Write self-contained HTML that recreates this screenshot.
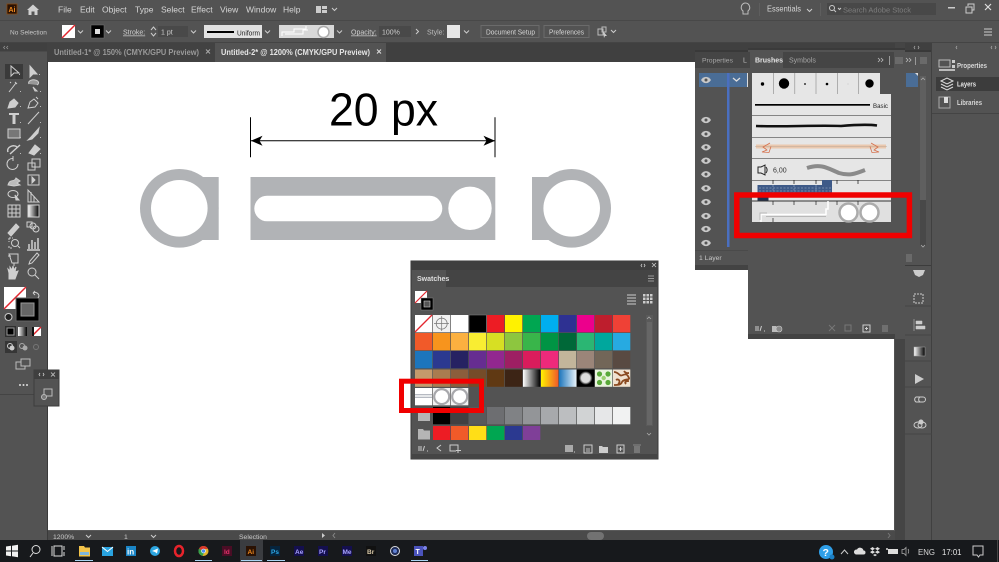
<!DOCTYPE html>
<html><head><meta charset="utf-8"><style>
html,body{margin:0;padding:0;background:#535353;width:999px;height:562px;overflow:hidden}
svg{display:block;font-family:"Liberation Sans",sans-serif;filter:blur(.3px)}
</style></head><body>
<svg width="999" height="562" viewBox="0 0 999 562" xmlns="http://www.w3.org/2000/svg">
<defs>
<linearGradient id="g1"><stop offset="0" stop-color="#fff"/><stop offset="1" stop-color="#000"/></linearGradient>
<linearGradient id="g2"><stop offset="0" stop-color="#fff200"/><stop offset="1" stop-color="#f15a29"/></linearGradient>
<linearGradient id="g3"><stop offset="0" stop-color="#1c75bc"/><stop offset="1" stop-color="#e6f2fa"/></linearGradient>
<radialGradient id="g4"><stop offset="0.55" stop-color="#ddd"/><stop offset="0.85" stop-color="#000"/></radialGradient>
</defs>
<rect width="999" height="562" fill="#535353"/>
<!-- menu bar -->
<rect x="7" y="4" width="10" height="10" fill="#2a1204" stroke="#8a4a10" stroke-width=".8"/>
<text x="8.500" y="12" font-size="7" font-weight="bold" fill="#f08a1d">Ai</text>
<path d="M27 10l6-5.500 6 5.500h-1.500v5h-3v-3.500h-3v3.500h-3v-5z" fill="#d0d0d0"/>
<g font-size="8.500" fill="#d6d6d6">
<text x="58" y="12.500">File</text><text x="80" y="12.500">Edit</text><text x="102" y="12.500">Object</text><text x="135" y="12.500">Type</text><text x="161" y="12.500">Select</text><text x="191" y="12.500">Effect</text><text x="220" y="12.500">View</text><text x="246" y="12.500">Window</text><text x="283" y="12.500">Help</text>
</g>
<rect x="316" y="6" width="5" height="7" fill="#ccc"/><rect x="322" y="6" width="5" height="3" fill="#ccc"/><rect x="322" y="10" width="5" height="3" fill="#ccc"/>
<path d="M332 8l2.500 2.500 2.500-2.500" fill="none" stroke="#ccc"/>
<path d="M745 3a4.500 4.500 0 0 1 3 8v3h-5v-3a4.500 4.500 0 0 1 2-8z" fill="none" stroke="#bbb"/>
<rect x="759" y="3" width="1" height="13" fill="#5e5e5e"/>
<text x="767" y="11.500" font-size="8.500" fill="#d6d6d6" textLength="34" lengthAdjust="spacingAndGlyphs">Essentials</text>
<path d="M807 9l2.500 2.500 2.500-2.500" fill="none" stroke="#ccc"/>
<rect x="820" y="3" width="1" height="13" fill="#5e5e5e"/>
<rect x="827" y="3" width="109" height="12" fill="#484848"/>
<circle cx="832" cy="8" r="2.500" fill="none" stroke="#ccc"/><path d="M834 10l2 2M838 8l1.500 1.500 1.500-1.500" stroke="#ccc" fill="none"/>
<text x="843" y="12.500" font-size="7.500" fill="#7e7e7e">Search Adobe Stock</text>
<rect x="948" y="7" width="7" height="1.500" fill="#ccc"/>
<rect x="966" y="7" width="6" height="6" fill="none" stroke="#ccc"/><path d="M968 6v-2h6v6h-2" fill="none" stroke="#ccc"/>
<path d="M985 4l6 6M991 4l-6 6" stroke="#ddd" stroke-width="1.200"/>
<rect x="0" y="20" width="999" height="1" fill="#484848"/>
<!-- control bar -->
<text x="10" y="34.500" font-size="6.500" fill="#c8c8c8">No Selection</text>
<rect x="62" y="25" width="13" height="13" fill="#fff"/><path d="M62 38l13-13" stroke="#e3262e" stroke-width="1.500"/>
<path d="M78 30.500l2.500 2.500 2.500-2.500M106 30.500l2.500 2.500 2.500-2.500" fill="none" stroke="#ccc"/>
<rect x="91" y="25" width="13" height="13" fill="#000" stroke="#777" stroke-width=".5"/><rect x="95" y="29" width="5" height="5" fill="#ddd"/>
<text x="123" y="34.500" font-size="7" fill="#d0d0d0" text-decoration="underline">Stroke:</text>
<path d="M151 30l2.500-3 2.500 3M151 33l2.500 3 2.500-3" fill="none" stroke="#ccc"/>
<rect x="158" y="26" width="30" height="11" fill="#494949"/>
<text x="161" y="34.500" font-size="7" fill="#ccc">1 pt</text>
<path d="M191 30.500l2.500 2.500 2.500-2.500" fill="none" stroke="#ccc"/>
<rect x="204" y="25" width="58" height="13" fill="#e2e2e2"/><rect x="207" y="31" width="27" height="2" fill="#000"/>
<text x="237" y="35.500" font-size="7" fill="#222" textLength="23" lengthAdjust="spacingAndGlyphs">Uniform</text>
<path d="M265 30.500l2.500 2.500 2.500-2.500" fill="none" stroke="#ccc"/>
<rect x="279" y="25" width="55" height="13" fill="#d8d8d8"/>
<path d="M282 36v-4h12v-3h12v-3M285 34h18v-4h5" fill="none" stroke="#fff"/><circle cx="323.500" cy="32" r="5.500" fill="#fff" stroke="#aaa" stroke-width="1.500"/>
<path d="M337 30.500l2.500 2.500 2.500-2.500" fill="none" stroke="#ccc"/>
<text x="351" y="34.500" font-size="7" fill="#d0d0d0" text-decoration="underline">Opacity:</text>
<rect x="379" y="26" width="32" height="11" fill="#494949"/>
<text x="382" y="34.500" font-size="7" fill="#ccc">100%</text>
<path d="M416 29l2.500 2.500-2.500 2.500" fill="none" stroke="#ccc"/>
<text x="427" y="34.500" font-size="7" fill="#bbb">Style:</text>
<rect x="447" y="25" width="13" height="13" fill="#e6e6e6"/>
<path d="M464 30.500l2.500 2.500 2.500-2.500" fill="none" stroke="#ccc"/>
<rect x="481" y="25.500" width="58" height="12" fill="none" stroke="#6b6b6b"/>
<text x="486" y="34.500" font-size="7" fill="#d6d6d6" textLength="49" lengthAdjust="spacingAndGlyphs">Document Setup</text>
<rect x="544" y="25.500" width="45" height="12" fill="none" stroke="#6b6b6b"/>
<text x="549" y="34.500" font-size="7" fill="#d6d6d6" textLength="35" lengthAdjust="spacingAndGlyphs">Preferences</text>
<path d="M598 29h5v6h-5zM602 27h4v5h-4z" fill="none" stroke="#bbb"/><path d="M603 31l4 5-2 0-1 2z" fill="#ccc"/>
<path d="M611 30l2.500 2.500 2.500-2.500" fill="none" stroke="#ccc"/>
<path d="M984 29h8M984 32h8M984 35h8" stroke="#ccc"/>
<rect x="0" y="42" width="999" height="1" fill="#444"/>
<!-- tab row -->
<rect x="0" y="43" width="999" height="19" fill="#404040"/>
<rect x="47" y="43" width="168" height="19" fill="#424242"/>
<rect x="215" y="43" width="171" height="19" fill="#535353"/>
<text x="54" y="55" font-size="7.800" font-weight="bold" fill="#9a9a9a" textLength="145" lengthAdjust="spacingAndGlyphs">Untitled-1* @ 150% (CMYK/GPU Preview)</text>
<path d="M206 49.500l4 4M210 49.500l-4 4" stroke="#aaa"/>
<text x="221" y="55" font-size="7.800" font-weight="bold" fill="#e6e6e6" textLength="149" lengthAdjust="spacingAndGlyphs">Untitled-2* @ 1200% (CMYK/GPU Preview)</text>
<path d="M377 49.500l4 4M381 49.500l-4 4" stroke="#ddd"/>
<!-- canvas -->
<rect x="48" y="62" width="846" height="468" fill="#fff"/>
<rect x="895" y="43" width="10" height="497" fill="#454545"/>
<rect x="0" y="43" width="47" height="497" fill="#535353"/>
<rect x="0" y="43" width="47" height="8" fill="#404040"/><rect x="0" y="51" width="47" height="1" fill="#4a4a4a"/>
<path d="M5 46l-1.500 1.500 1.500 1.500M8 46l-1.500 1.500 1.500 1.500" fill="none" stroke="#999" stroke-width=".7"/>
<rect x="47" y="62" width="1" height="478" fill="#3a3a3a"/>
<!-- artwork -->
<g fill="#b1b3b6">
<circle cx="179.300" cy="208.300" r="39.300"/><rect x="179.300" y="177" width="39.400" height="63"/>
<rect x="250.500" y="177" width="244.800" height="63"/>
<circle cx="571.700" cy="208.300" r="39.300"/><rect x="532" y="177" width="39.700" height="63"/>
</g>
<g fill="#fff">
<circle cx="179.300" cy="208.300" r="28.300"/>
<rect x="254.300" y="195.700" width="188" height="25.600" rx="12.800"/>
<circle cx="470" cy="208.300" r="21.700"/>
<circle cx="571.700" cy="208.300" r="28.300"/>
</g>
<path d="M250.500 117.300v40M495 117.300v40" stroke="#000" stroke-width="1"/>
<path d="M251 140.700h244" stroke="#000" stroke-width="1"/>
<path d="M251 140.700l11.500-5-3 5 3 5zM495 140.700l-11.500-5 3 5-3 5z" fill="#000"/>
<text x="329" y="125.500" font-size="46" fill="#000" textLength="109" lengthAdjust="spacingAndGlyphs">20 px</text>
<!-- tools -->
<rect x="5" y="64" width="18" height="15" fill="#3a3a3a"/>
<g fill="none" stroke="#cfcfcf" stroke-width="1">
<path d="M11 66l0 10 3-3 5 0z"/>
<path d="M30 66v11l3-3h4z" fill="#cfcfcf"/>
<path d="M9 92l7-9M15 82l2 2M10 82l1 1" />
<path d="M29 84a5 3 0 1 1 8 1M33 87l4 4-2 0z" fill="#999"/>
<path d="M8 108l2-6 4-3 4 4-3 4z" fill="#cfcfcf"/>
<path d="M28 108l2-6 4-3 4 4-3 4zM38 99l-2-2"/>
<path d="M9 113h10v2h-3.500v9h-3v-9h-3.500z" fill="#cfcfcf" stroke="none"/>
<path d="M28 124l11-12"/>
<rect x="8" y="129" width="12" height="9" fill="#777"/>
<path d="M28 140l3-3 8-9-1 5-6 6z" fill="#cfcfcf"/>
<path d="M8 152c-2-5 6-8 9-5M10 154l10-9" stroke-width="1.500"/>
<path d="M29 153l6-8 5 4-6 6z" fill="#cfcfcf"/>
<path d="M18 164a5.500 5.500 0 1 1-5-5.500M13 156v5"/>
<rect x="28" y="163" width="7" height="7"/><rect x="32" y="159" width="8" height="8"/>
<path d="M8 185c2-7 6-2 8-7l4 3-3 2 3 2-6 1z" fill="#bbb"/>
<rect x="28" y="175" width="11" height="10"/><path d="M32 177l3 3-3 3z" fill="#cfcfcf"/>
<ellipse cx="13" cy="194" rx="5" ry="3.500"/><path d="M15 195l4 5-3 0z" fill="#ccc"/>
<path d="M28 202v-12l11 12z"/><path d="M31 192v10M34 196v6"/>
<rect x="8" y="205" width="12" height="12"/><path d="M12 205v12M16 205v12M8 209h12M8 213h12"/>
<rect x="28" y="205" width="11" height="12" fill="url(#g1)"/>
<path d="M8 233l8-9 3 3-8 9z" fill="#ccc"/>
<circle cx="33" cy="226" r="3"/><circle cx="36" cy="229" r="3"/><rect x="27" y="222" width="5" height="5"/>
<path d="M9 238h4M9 238v4M9 246v2h3" stroke-dasharray="2 1"/><circle cx="15" cy="243" r="3.500"/><path d="M18 246l2 2"/>
<path d="M29 249v-5M32 249v-9M35 249v-7M38 249v-11M27 250h13" stroke-width="1.500"/>
<path d="M9 254h9v9h-6zM8 256h3M14 263v3"/>
<path d="M29 264l3-1 7-8-2-2-7 8z"/>
<path d="M9 279v-6l-1-4 2 2v-4l2 3 1-4 1 4 2-3-1 5 3-1-3 8z" fill="#cfcfcf"/>
<circle cx="32" cy="272" r="4"/><path d="M35 275l4 4"/>
</g>
<g fill="#bbb"><rect x="19" y="74" width="1" height="1"/><rect x="39" y="74" width="1" height="1"/><rect x="20" y="91" width="1" height="1"/><rect x="40" y="91" width="1" height="1"/><rect x="20" y="106" width="1" height="1"/><rect x="40" y="106" width="1" height="1"/><rect x="20" y="122" width="1" height="1"/><rect x="40" y="122" width="1" height="1"/><rect x="20" y="137" width="1" height="1"/><rect x="40" y="137" width="1" height="1"/><rect x="20" y="153" width="1" height="1"/><rect x="40" y="153" width="1" height="1"/></g>
<!-- fill/stroke -->
<rect x="4" y="287" width="22" height="22" fill="#fff"/><path d="M4 309l22-22" stroke="#e3262e" stroke-width="1.500"/>
<rect x="16" y="298" width="23" height="23" fill="#000" stroke="#666"/><rect x="21" y="303" width="13" height="13" fill="#666" stroke="#999"/>
<path d="M33 293a4 4 0 0 1 6 3l-1 2M33 293l2-2M33 293l2 2" fill="none" stroke="#ccc"/>
<circle cx="8.500" cy="317" r="3.500" fill="#222" stroke="#ccc"/>
<rect x="5" y="326" width="11" height="11" fill="#2f2f2f"/><rect x="7" y="328" width="7" height="7" fill="#000" stroke="#999"/>
<rect x="18" y="327" width="9" height="9" fill="url(#g1)"/>
<rect x="32" y="327" width="9" height="9" fill="#fff"/><path d="M32 336l9-9" stroke="#e3262e" stroke-width="1.500"/><rect x="32" y="327" width="2" height="9" fill="#111"/>
<rect x="5" y="341" width="12" height="12" fill="#363636"/><circle cx="10" cy="346" r="2.500" fill="none" stroke="#ccc"/><circle cx="12" cy="348" r="2.500" fill="#ccc"/>
<circle cx="22" cy="346" r="2.500" fill="none" stroke="#aaa"/><circle cx="25" cy="348" r="2.500" fill="#aaa"/>
<circle cx="36" cy="347" r="2.500" fill="none" stroke="#777"/>
<rect x="16" y="362" width="9" height="7" fill="none" stroke="#bbb"/><rect x="21" y="359" width="9" height="7" fill="#535353" stroke="#bbb"/>
<circle cx="20" cy="385" r="1" fill="#ddd"/><circle cx="23.500" cy="385" r="1" fill="#ddd"/><circle cx="27" cy="385" r="1" fill="#ddd"/>
<rect x="0" y="394" width="34" height="1" fill="#444"/>
<!-- mini panel -->
<rect x="34" y="370" width="25" height="36" fill="#535353" stroke="#3c3c3c"/>
<rect x="34" y="370" width="25" height="9" fill="#3f3f3f"/>
<path d="M40 373l-1 1.500 1 1.500M43 373l1 1.500-1 1.500M51 372.500l4 4M55 372.500l-4 4" fill="none" stroke="#ccc" stroke-width=".8"/>
<rect x="44" y="389" width="8" height="7" fill="none" stroke="#bbb"/><circle cx="44" cy="397" r="2.500" fill="#777" stroke="#bbb"/>
<!-- layers panel -->
<rect x="695" y="50" width="236" height="220" fill="#535353"/>
<rect x="695" y="50" width="236" height="2" fill="#393939"/>
<rect x="695" y="52" width="210" height="16" fill="#454545"/>
<text x="702" y="62.500" font-size="6.800" fill="#a5a5a5">Properties</text>
<rect x="695" y="265" width="53" height="5" fill="#434343"/>
<rect x="699" y="73" width="48" height="14" fill="#4a6d96"/>
<rect x="747" y="73" width="1" height="14" fill="#ddd"/>
<rect x="727" y="73" width="2.500" height="174" fill="#4a6fc0"/>
<text x="743" y="62.500" font-size="7" fill="#bbb">L</text>
<path d="M733 78l3.500 3 3.500-3" fill="none" stroke="#ddd" stroke-width="1.300"/>
<g fill="#c9c9c9" stroke="none">
<path d="M701 80c2.500-4.200 7.500-4.200 10 0-2.500 4.200-7.500 4.200-10 0z"/><path d="M701 120c2.500-4.200 7.500-4.200 10 0-2.500 4.200-7.500 4.200-10 0z"/><path d="M701 134c2.500-4.200 7.500-4.200 10 0-2.500 4.200-7.500 4.200-10 0z"/><path d="M701 147.300c2.500-4.200 7.500-4.200 10 0-2.500 4.200-7.500 4.200-10 0z"/><path d="M701 160.700c2.500-4.200 7.500-4.200 10 0-2.500 4.200-7.500 4.200-10 0z"/><path d="M701 174.300c2.500-4.200 7.500-4.200 10 0-2.500 4.200-7.500 4.200-10 0z"/><path d="M701 188.300c2.500-4.200 7.500-4.200 10 0-2.500 4.200-7.500 4.200-10 0z"/><path d="M701 202c2.500-4.200 7.500-4.200 10 0-2.500 4.200-7.500 4.200-10 0z"/><path d="M701 216c2.500-4.200 7.500-4.200 10 0-2.500 4.200-7.500 4.200-10 0z"/><path d="M701 229c2.500-4.200 7.500-4.200 10 0-2.500 4.200-7.500 4.200-10 0z"/><path d="M701 243c2.500-4.200 7.500-4.200 10 0-2.500 4.200-7.500 4.200-10 0z"/>
</g>
<g fill="#555"><circle cx="706" cy="80" r="1.500"/><circle cx="706" cy="120" r="1.500"/><circle cx="706" cy="134" r="1.500"/><circle cx="706" cy="147.300" r="1.500"/><circle cx="706" cy="160.700" r="1.500"/><circle cx="706" cy="174.300" r="1.500"/><circle cx="706" cy="188.300" r="1.500"/><circle cx="706" cy="202" r="1.500"/><circle cx="706" cy="216" r="1.500"/><circle cx="706" cy="229" r="1.500"/><circle cx="706" cy="243" r="1.500"/></g>
<text x="699" y="260" font-size="6.800" fill="#c6c6c6">1 Layer</text>
<rect x="695" y="250" width="53" height="1" fill="#4a4a4a"/>
<!-- brushes panel -->
<rect x="748" y="50" width="157" height="289" fill="#535353"/>
<rect x="748" y="48" width="157" height="2" fill="#3a3a3a"/>
<rect x="748" y="52" width="146" height="16" fill="#454545"/>
<rect x="750" y="52" width="33" height="17" fill="#535353"/>
<text x="755" y="62.500" font-size="7" font-weight="bold" fill="#e6e6e6">Brushes</text>
<text x="789" y="62.500" font-size="7" fill="#a5a5a5">Symbols</text>
<path d="M878 58l2 2-2 2M881 58l2 2-2 2M906 58l2 2-2 2M909 58l2 2-2 2" fill="none" stroke="#bbb" stroke-width=".8"/>
<rect x="889" y="56" width="1" height="9" fill="#999"/>
<rect x="895" y="57" width="8" height="7" fill="#6a6a6a"/><rect x="915" y="57" width="1" height="8" fill="#999"/><rect x="920" y="57" width="7" height="7" fill="#6a6a6a"/>
<rect x="748" y="334" width="147" height="5" fill="#434343"/>
<!-- layers right -->
<rect x="905" y="68" width="26" height="202" fill="#535353"/>
<rect x="906" y="73" width="12" height="14" fill="#4a6d96"/><path d="M915 73l3 3v-3z" fill="#ddd"/>
<rect x="920" y="76" width="6" height="124" fill="#5f5f5f"/>
<rect x="920" y="200" width="6" height="46" fill="#484848"/>
<path d="M921 80l2-2 2 2M921 245l2 2 2-2" stroke="#aaa" fill="none" stroke-width=".8"/>
<rect x="906" y="254" width="6" height="8" fill="#6a6a6a"/>
<rect x="905" y="265" width="27" height="1" fill="#3c3c3c"/>
<!-- brushes list -->
<rect x="752" y="73" width="128" height="21" fill="#e6e6e6"/>
<g stroke="#888" stroke-width=".6"><path d="M773.500 73v21M794.800 73v21M816 73v21M837.400 73v21M858.700 73v21"/></g>
<circle cx="762.500" cy="84" r="1.700"/><circle cx="784" cy="83.500" r="5.200"/><circle cx="805" cy="84" r=".9"/><circle cx="827" cy="84" r="1.300"/><circle cx="848" cy="84" r=".5" fill="#bbb"/><circle cx="869.500" cy="83.500" r="4.200"/>
<rect x="752" y="94" width="139" height="128" fill="#e6e6e6"/>
<path d="M752 115.500h139M752 137.500h139M752 158.500h139M752 180.500h139" stroke="#666" stroke-width=".8"/>
<rect x="755" y="104" width="115" height="1.700" fill="#000"/>
<text x="873" y="108" font-size="6.800" fill="#222" textLength="15" lengthAdjust="spacingAndGlyphs">Basic</text>
<path d="M756 126c30 1 60-1 85 0 12-1 25-2 36-.5" stroke="#111" stroke-width="2.600" fill="none"/>
<rect x="756" y="144.500" width="130" height="4" fill="#eac8ae"/><path d="M755 146.500h132" stroke="#b9a595" stroke-width=".6"/>
<path d="M770 143l-7 4 4 3-5 2 7 .5 2-6M871 143l7 4-4 3 5 2-7 .5-2-6" fill="none" stroke="#d5704c" stroke-width=".8"/>
<path d="M758 167h3l4-2v10l-4-2h-3zM766 167c1.500 2 1.500 4 0 6" fill="none" stroke="#222"/>
<text x="773" y="172.500" font-size="7" fill="#333">6,00</text>
<path d="M807 168c15-5 22 1 32 5 10 3 16 1 26-3" stroke="#8a8a8a" stroke-width="4" fill="none"/>
<rect x="757.500" y="185" width="74.500" height="10" fill="#3e5a88"/>
<rect x="822" y="180" width="10" height="8" fill="#3e5a88"/>
<path d="M759 188h72M759 191h72M773 185v10M794 185v10M816 185v10" stroke="#a9b8d0" stroke-width=".5" stroke-dasharray="2 1.500"/>
<g stroke="#111" stroke-width=".7"><path d="M773 180v4M794 180v4M816 180v4M837 180v4M858 180v4"/></g>
<rect x="757.500" y="195" width="11" height="6" fill="#20304f"/>
<rect x="752" y="201" width="139" height="21" fill="#e0e0e0"/>
<path d="M752 201h139" stroke="#333"/>
<path d="M761 222v-7.500h14M765 214.500h61v-5.500h2v-8" fill="none" stroke="#fff" stroke-width="1.500"/>
<path d="M760 220v-7h7M766 216.500h60" stroke="#b8b8b8" fill="none"/>
<circle cx="848.500" cy="212.500" r="9" fill="#fff" stroke="#ababab" stroke-width="2.500"/>
<circle cx="869.500" cy="212.500" r="9" fill="#fff" stroke="#ababab" stroke-width="2.500"/>
<path d="M773 201v4M794 201v4M816 201v4M837 201v4M858 201v4M773 222v-4" stroke="#222" stroke-width=".7"/>
<rect x="736.800" y="195" width="172.600" height="40.500" fill="none" stroke="#f00000" stroke-width="5.500"/>
<!-- brushes footer -->
<path d="M756 331v-5M758 331v-5M760 331l1.500-5" stroke="#ccc"/><path d="M764 331h1" stroke="#ccc"/>
<path d="M772 326h4l1 1h4v5h-9z" fill="#bbb"/><circle cx="779" cy="329" r="3" fill="#888" stroke="#ccc" stroke-width=".6"/>
<path d="M829 331l6-6M829 325l6 6" stroke="#777"/>
<rect x="845" y="325" width="6" height="6" fill="none" stroke="#777"/>
<rect x="863" y="325" width="7" height="7" fill="none" stroke="#ccc"/><path d="M866.500 327v3M865 328.500h3" stroke="#ccc"/>
<rect x="882" y="325" width="6" height="7" fill="#6f6f6f"/>
<!-- dock -->
<rect x="905" y="266" width="27" height="274" fill="#535353"/>
<rect x="931" y="43" width="1" height="497" fill="#404040"/>
<path d="M905 306h27M905 335h27M905 361h27M905 387h27M905 434h27" stroke="#444"/>
<path d="M913 270h12l-2 5-4 2-4-2z" fill="#ccc"/>
<rect x="914" y="294" width="9" height="9" fill="none" stroke="#ccc" stroke-dasharray="2 1"/>
<path d="M914 319v12M916 321h6v3h-6zM916 326h9v3h-9z" fill="#ccc" stroke="#ccc" stroke-width=".5"/>
<rect x="914" y="347" width="11" height="9" fill="url(#g1)" stroke="#aaa" stroke-width=".5"/>
<path d="M915 374l9 5-9 5z" fill="#ccc"/>
<path d="M920 397a3 3 0 0 0 0 5h-4a3 3 0 0 1 0-5zM918 397h5a2.500 2.500 0 0 1 0 5h-5" fill="none" stroke="#ccc"/>
<ellipse cx="918" cy="425" rx="4" ry="3" fill="none" stroke="#ccc"/><ellipse cx="922" cy="425" rx="4" ry="3" fill="none" stroke="#ccc"/><circle cx="921" cy="422" r="2.500" fill="#ccc"/>
<!-- right dock panel -->
<rect x="932" y="43" width="67" height="497" fill="#535353"/>
<rect x="932" y="113" width="67" height="1" fill="#444"/>
<rect x="936" y="77" width="68" height="14" fill="#3c3c3c"/>
<rect x="939" y="60" width="11" height="7" fill="none" stroke="#bbb"/><rect x="952" y="60" width="3" height="3" fill="#ccc"/><rect x="952" y="65" width="3" height="3" fill="#ccc"/><rect x="939" y="69" width="16" height="2" fill="#bbb"/>
<path d="M941 81l6-3 6 3-6 3zM941 84l6 3 6-3M941 87l6 3 6-3" fill="none" stroke="#ddd"/>
<rect x="939" y="97" width="11" height="11" fill="none" stroke="#aaa"/><rect x="944" y="97" width="4" height="6" fill="#ddd"/>
<text x="957" y="68" font-size="7" font-weight="bold" fill="#d8d8d8" textLength="30" lengthAdjust="spacingAndGlyphs">Properties</text>
<text x="957" y="86.500" font-size="7" font-weight="bold" fill="#e8e8e8" textLength="19" lengthAdjust="spacingAndGlyphs">Layers</text>
<text x="957" y="105" font-size="7" font-weight="bold" fill="#d8d8d8" textLength="25" lengthAdjust="spacingAndGlyphs">Libraries</text>
<path d="M915 46l-1 1.500 1 1.500M918 46l1 1.500-1 1.500M957 46l-1 1.500 1 1.500" fill="none" stroke="#aaa" stroke-width=".7"/>
<path d="M992 46l-1 1.500 1 1.500M995 46l1 1.500-1 1.500" fill="none" stroke="#aaa" stroke-width=".7"/>
<!-- swatches panel -->
<rect x="411" y="261" width="247" height="198" fill="#535353" stroke="#393939"/>
<rect x="411" y="261" width="247" height="9" fill="#3f3f3f"/>
<rect x="411" y="270" width="247" height="17" fill="#444"/>
<rect x="412" y="270" width="34" height="18" fill="#535353"/>
<text x="417" y="281" font-size="7" font-weight="bold" fill="#dedede">Swatches</text>
<path d="M642 264l-1 1.500 1 1.500M644 264l1 1.500-1 1.500M652 263l4 4M656 263l-4 4" fill="none" stroke="#ccc" stroke-width=".8"/>
<path d="M648 276h6M648 278.500h6M648 281h6" stroke="#999"/>
<rect x="415" y="291" width="12" height="12" fill="#fff"/><path d="M415 303l12-12" stroke="#e3262e" stroke-width="1.200"/>
<rect x="421" y="298" width="12" height="12" fill="#000" stroke="#888" stroke-width=".5"/><rect x="424" y="301" width="6" height="6" fill="#555" stroke="#ccc" stroke-width=".6"/>
<path d="M627 295h9M627 298h9M627 301h9M627 304h9" stroke="#ccc"/>
<g fill="#ccc"><rect x="643" y="294" width="2.500" height="2.500"/><rect x="646.500" y="294" width="2.500" height="2.500"/><rect x="650" y="294" width="2.500" height="2.500"/><rect x="643" y="297.500" width="2.500" height="2.500"/><rect x="646.500" y="297.500" width="2.500" height="2.500"/><rect x="650" y="297.500" width="2.500" height="2.500"/><rect x="643" y="301" width="2.500" height="2.500"/><rect x="646.500" y="301" width="2.500" height="2.500"/><rect x="650" y="301" width="2.500" height="2.500"/></g>
<!-- row 1 -->
<rect x="415" y="315" width="17.300" height="17.300" fill="#fff"/><path d="M415 332l17-17" stroke="#e3262e" stroke-width="1.300"/>
<rect x="433" y="315" width="17.300" height="17.300" fill="#f2f2f2"/><circle cx="441.700" cy="323.600" r="5.500" fill="none" stroke="#777" stroke-width=".7"/><path d="M441.700 316v15M434 323.600h15" stroke="#777" stroke-width=".7"/>
<rect x="451" y="315" width="17.300" height="17.300" fill="#fff"/>
<rect x="469" y="315" width="17.300" height="17.300" fill="#000" stroke="#777" stroke-width=".6"/>
<rect x="487" y="315" width="17.300" height="17.300" fill="#ed1c24"/><rect x="505" y="315" width="17.300" height="17.300" fill="#fff200"/><rect x="523" y="315" width="17.300" height="17.300" fill="#00a651"/><rect x="541" y="315" width="17.300" height="17.300" fill="#00aeef"/><rect x="559" y="315" width="17.300" height="17.300" fill="#2e3192"/><rect x="577" y="315" width="17.300" height="17.300" fill="#ec008c"/><rect x="595" y="315" width="17.300" height="17.300" fill="#be1e2d"/><rect x="613" y="315" width="17.300" height="17.300" fill="#ef4136"/>
<!-- row 2 -->
<rect x="415" y="333" width="17.300" height="17.300" fill="#f15a29"/><rect x="433" y="333" width="17.300" height="17.300" fill="#f7941d"/><rect x="451" y="333" width="17.300" height="17.300" fill="#fbb040"/><rect x="469" y="333" width="17.300" height="17.300" fill="#f9ed32"/><rect x="487" y="333" width="17.300" height="17.300" fill="#d7df23"/><rect x="505" y="333" width="17.300" height="17.300" fill="#8dc63f"/><rect x="523" y="333" width="17.300" height="17.300" fill="#39b54a"/><rect x="541" y="333" width="17.300" height="17.300" fill="#009444"/><rect x="559" y="333" width="17.300" height="17.300" fill="#006838"/><rect x="577" y="333" width="17.300" height="17.300" fill="#2bb673"/><rect x="595" y="333" width="17.300" height="17.300" fill="#00a79d"/><rect x="613" y="333" width="17.300" height="17.300" fill="#27aae1"/>
<!-- row 3 -->
<rect x="415" y="351" width="17.300" height="17.300" fill="#1c75bc"/><rect x="433" y="351" width="17.300" height="17.300" fill="#2b3990"/><rect x="451" y="351" width="17.300" height="17.300" fill="#262262"/><rect x="469" y="351" width="17.300" height="17.300" fill="#662d91"/><rect x="487" y="351" width="17.300" height="17.300" fill="#92278f"/><rect x="505" y="351" width="17.300" height="17.300" fill="#9e1f63"/><rect x="523" y="351" width="17.300" height="17.300" fill="#da1c5c"/><rect x="541" y="351" width="17.300" height="17.300" fill="#ee2a7b"/><rect x="559" y="351" width="17.300" height="17.300" fill="#c2b59b"/><rect x="577" y="351" width="17.300" height="17.300" fill="#9b8579"/><rect x="595" y="351" width="17.300" height="17.300" fill="#726658"/><rect x="613" y="351" width="17.300" height="17.300" fill="#594a42"/>
<!-- row 4 -->
<rect x="415" y="369.500" width="17.300" height="17.300" fill="#c49a6c"/><rect x="433" y="369.500" width="17.300" height="17.300" fill="#a97c50"/><rect x="451" y="369.500" width="17.300" height="17.300" fill="#8b5e3c"/><rect x="469" y="369.500" width="17.300" height="17.300" fill="#754c29"/><rect x="487" y="369.500" width="17.300" height="17.300" fill="#603913"/><rect x="505" y="369.500" width="17.300" height="17.300" fill="#3c2415"/>
<rect x="523" y="369.500" width="17.300" height="17.300" fill="url(#g1)"/><rect x="541" y="369.500" width="17.300" height="17.300" fill="url(#g2)"/><rect x="559" y="369.500" width="17.300" height="17.300" fill="url(#g3)"/><rect x="577" y="369.500" width="17.300" height="17.300" fill="#000"/><circle cx="585.700" cy="378" r="8" fill="url(#g4)"/>
<rect x="595" y="369.500" width="17.300" height="17.300" fill="#e8f3dd"/><circle cx="599.500" cy="374" r="2.600" fill="#58a838"/><circle cx="608" cy="374" r="2.600" fill="#58a838"/><circle cx="599.500" cy="382.500" r="2.600" fill="#58a838"/><circle cx="608" cy="382.500" r="2.600" fill="#58a838"/><circle cx="603.700" cy="378" r="2.200" fill="#9ad070"/>
<rect x="613" y="369.500" width="17.300" height="17.300" fill="#f0e2d0"/><path d="M614 372c5 0 5 5 9 3s5 1 6 3-6 1-7 4-4 3-8 3M616 380c3-2 5 2 2 4M624 371c2 3 4 2 5 2M626 384c-2-2 0-3 3-3" fill="none" stroke="#8b4a20" stroke-width="1.800"/>
<!-- row 5 -->
<rect x="415" y="388" width="17.300" height="17.300" fill="#fff"/><path d="M415 394.700h17M415 397.200h17" stroke="#9da3ad"/>
<rect x="433" y="388" width="17.300" height="17.300" fill="#f2f2f2"/><circle cx="441.700" cy="396.600" r="7.500" fill="#fff" stroke="#a8a8ac" stroke-width="2.200"/>
<rect x="451" y="388" width="17.300" height="17.300" fill="#f2f2f2"/><circle cx="459.700" cy="396.600" r="7.500" fill="#fff" stroke="#a8a8ac" stroke-width="2.200"/>
<!-- row 6 -->
<rect x="418" y="413" width="12" height="8" fill="#b5b5b5"/><path d="M418 413v-2h5l1 2" fill="#b5b5b5"/>
<rect x="433" y="407" width="17.300" height="17.300" fill="#000"/><rect x="451" y="407" width="17.300" height="17.300" fill="#414042"/><rect x="469" y="407" width="17.300" height="17.300" fill="#58595b"/><rect x="487" y="407" width="17.300" height="17.300" fill="#6d6e71"/><rect x="505" y="407" width="17.300" height="17.300" fill="#808285"/><rect x="523" y="407" width="17.300" height="17.300" fill="#939598"/><rect x="541" y="407" width="17.300" height="17.300" fill="#a7a9ac"/><rect x="559" y="407" width="17.300" height="17.300" fill="#bcbec0"/><rect x="577" y="407" width="17.300" height="17.300" fill="#d1d3d4"/><rect x="595" y="407" width="17.300" height="17.300" fill="#e6e7e8"/><rect x="613" y="407" width="17.300" height="17.300" fill="#f1f2f2"/>
<!-- row 7 -->
<path d="M418 433v-4h5l1 1.500h6v9h-12z" fill="#b5b5b5"/>
<rect x="433" y="426" width="17.300" height="14" fill="#ed1c24"/><rect x="451" y="426" width="17.300" height="14" fill="#f15a29"/><rect x="469" y="426" width="17.300" height="14" fill="#ffde17"/><rect x="487" y="426" width="17.300" height="14" fill="#00a651"/><rect x="505" y="426" width="17.300" height="14" fill="#2b3990"/><rect x="523" y="426" width="17.300" height="14" fill="#7f3f98"/>
<!-- swatch scrollbar -->
<rect x="646" y="315" width="7" height="111" fill="#5a5a5a"/><rect x="647" y="322" width="5" height="103" fill="#666"/>
<path d="M647 319l2-2 2 2M647 433l2 2 2-2" stroke="#aaa" fill="none" stroke-width=".8"/>
<!-- swatch footer -->
<rect x="412" y="441" width="245" height="13" fill="#535353"/>
<rect x="412" y="454" width="245" height="4" fill="#454545"/>
<path d="M419 451v-5M421 451v-5M423 451l1.500-5M427 451h1" stroke="#ccc"/>
<path d="M441 445l-4 3 4 3M437 448h1" fill="none" stroke="#ccc"/>
<path d="M456 451h-6v-6h8v3M458 448v5M456 450.500h5" fill="none" stroke="#ccc"/>
<rect x="565" y="445" width="8" height="7" fill="#aaa"/><path d="M574 452h1" stroke="#ccc"/>
<rect x="584" y="445" width="8" height="8" fill="none" stroke="#ccc"/><rect x="586" y="448" width="4" height="4" fill="#888"/>
<path d="M599 453v-7h3l1 1h5v6z" fill="#ccc"/>
<rect x="617" y="445" width="7" height="8" fill="none" stroke="#ccc"/><path d="M620.500 447v4M618.500 449h4" stroke="#ccc"/>
<rect x="634" y="446" width="6" height="7" fill="#777"/><path d="M633 445h8" stroke="#888"/>
<!-- red rect swatches -->
<rect x="401.500" y="381.200" width="80" height="29.300" fill="none" stroke="#f00000" stroke-width="5"/>
<!-- status bar -->
<rect x="48" y="530" width="847" height="10" fill="#4a4a4a"/>
<rect x="48" y="530" width="847" height="1" fill="#5a5a5a"/>
<g font-size="6.800" fill="#c8c8c8">
<text x="53" y="539">1200%</text><text x="124" y="539">1</text><text x="239" y="539">Selection</text>
</g>
<path d="M86 535l2.500 2.500 2.500-2.500M151 535l2.500 2.500 2.500-2.500" stroke="#ccc" fill="none"/>
<path d="M322 533l3 2.500-3 2.500z" fill="#ccc"/><path d="M335 533l-2 2.500 2 2.500" fill="none" stroke="#888"/>
<rect x="587" y="532" width="17" height="8" rx="4" fill="#727272"/>
<path d="M888 533l2 2.500-2 2.500" stroke="#777" fill="none"/>
<!-- taskbar -->
<rect x="0" y="540" width="999" height="22" fill="#17191c"/>
<rect x="240" y="540" width="23" height="22" fill="#3a3c40"/>
<path d="M6 546.500l5-.7v4.700h-5zM12 545.700l6-.9v5.700h-6zM6 551.500h5v4.700l-5-.7zM12 551.500h6v5.700l-6-.9z" fill="#f2f2f2"/>
<circle cx="36" cy="549.500" r="4" fill="none" stroke="#ddd"/><path d="M33 553l-3 4" stroke="#ddd"/>
<path d="M54 546h8v10h-8zM52 546v10M64 546v4M64 552v4" fill="none" stroke="#ddd"/>
<path d="M79 546h5l1 1.500h5v9h-11z" fill="#f2c34a"/><rect x="80" y="552" width="9" height="3" fill="#7db6dd"/>
<path d="M102 547h11v9h-11z" fill="#29a3e0"/><path d="M102 547l5.500 4.500 5.500-4.500" fill="none" stroke="#fff"/>
<rect x="126" y="546" width="10" height="10" fill="#1a85c6"/><text x="127" y="554.500" font-size="8" font-weight="bold" fill="#fff">in</text>
<circle cx="155" cy="551" r="5" fill="#2ca5e0"/><path d="M152 551l6-2.500-1 5-2-1.500z" fill="#fff"/>
<ellipse cx="179" cy="551" rx="4" ry="5" fill="none" stroke="#e8232b" stroke-width="2.500"/>
<circle cx="203.500" cy="551" r="5" fill="#e2b52d"/><path d="M203.500 546a5 5 0 0 0-4.400 2.500l2.400 3 2-2.500h4.500a5 5 0 0 0-4.500-3z" fill="#d8392b"/><path d="M199.100 548.500a5 5 0 0 0 3.400 7.400l2-3.500z" fill="#37a24b"/><circle cx="203.500" cy="551" r="2" fill="#4a8af4" stroke="#fff" stroke-width=".6"/>
<rect x="222" y="546" width="10" height="10" fill="#4a0d25"/><text x="224" y="554" font-size="6.500" font-weight="bold" fill="#e2336b">Id</text>
<rect x="246" y="546" width="10" height="10" fill="#2a1204"/><text x="247.500" y="554" font-size="6.500" font-weight="bold" fill="#f08a1d">Ai</text>
<rect x="270" y="546" width="10" height="10" fill="#06243d"/><text x="271" y="554" font-size="6.500" font-weight="bold" fill="#2ca8e8">Ps</text>
<rect x="294" y="546" width="10" height="10" fill="#140f4e"/><text x="295" y="554" font-size="6.500" font-weight="bold" fill="#a8a2ff">Ae</text>
<rect x="318" y="546" width="10" height="10" fill="#140f4e"/><text x="319" y="554" font-size="6.500" font-weight="bold" fill="#a8a2ff">Pr</text>
<rect x="342" y="546" width="10" height="10" fill="#140f4e"/><text x="342.500" y="554" font-size="6.500" font-weight="bold" fill="#a8a2ff">Me</text>
<rect x="366" y="546" width="10" height="10" fill="#111"/><text x="367" y="554" font-size="6.500" font-weight="bold" fill="#d8c8a8">Br</text>
<circle cx="395" cy="551" r="4.500" fill="#1d2a55" stroke="#ddd"/><circle cx="395" cy="551" r="2" fill="#5f7fd0"/>
<rect x="414" y="546" width="9" height="10" fill="#4b53bc"/><circle cx="425" cy="548" r="2" fill="#7b83eb"/><text x="415.500" y="554" font-size="7" font-weight="bold" fill="#fff">T</text>
<g fill="#a9d4f2"><rect x="75" y="560" width="18" height="1"/><rect x="195" y="560" width="17" height="1"/><rect x="241" y="560" width="21" height="1"/><rect x="267" y="560" width="18" height="1"/><rect x="411" y="560" width="17" height="1"/></g>
<circle cx="826" cy="552" r="7" fill="#2f9fe8"/><text x="822.500" y="556" font-size="10.500" font-weight="bold" fill="#fff">?</text><circle cx="832" cy="557" r="2.500" fill="#1b7fc4"/>
<path d="M841 554l3.500-4 3.500 4" fill="none" stroke="#ccc"/>
<path d="M856 554.500a2.500 2.500 0 0 1 1-5 3.500 3.500 0 0 1 6.500 1 2 2 0 0 1 0 4z" fill="#ddd"/>
<path d="M872.500 547l2.500 1.700-2.500 1.700-2.500-1.700zM877.500 547l2.500 1.700-2.500 1.700-2.500-1.700zM872.500 550.400l2.500 1.700-2.500 1.700-2.500-1.700zM877.500 550.400l2.500 1.700-2.500 1.700-2.500-1.700zM875 554l2 1-2 1.300-2-1.300z" fill="#ddd"/>
<rect x="888" y="549" width="10" height="5" fill="#ddd"/><rect x="886" y="548" width="2" height="2" fill="#aaa"/>
<path d="M902 549.500h2l2-2v8l-2-2h-2zM908 549c1 1.500 1 3 0 4.500" fill="none" stroke="#aaa" stroke-width=".8"/>
<text x="918" y="555" font-size="7.800" fill="#d6d6d6">ENG</text>
<text x="942" y="555" font-size="7.800" fill="#e6e6e6">17:01</text>
<path d="M973 546h10v9h-3l-1.500 2-1.500-2h-4z" fill="none" stroke="#ccc"/>
<rect x="997" y="540" width="1" height="22" fill="#444"/>
</svg>
</body></html>
